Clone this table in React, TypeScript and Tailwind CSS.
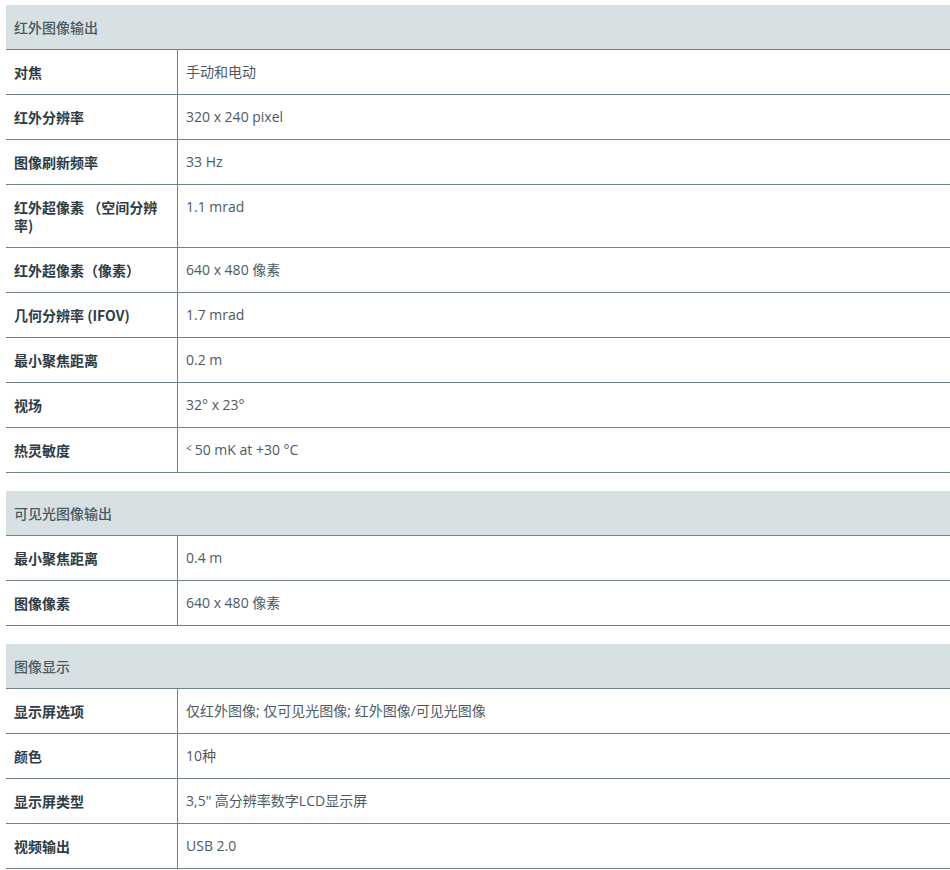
type Row = { label: string; value: string };
type Section = { title: string; rows: Row[] };

const sections: Section[] = [
  {
    title: '红外图像输出',
    rows: [
      { label: '对焦', value: '手动和电动' },
      { label: '红外分辨率', value: '320 x 240 pixel' },
      { label: '图像刷新频率', value: '33 Hz' },
      { label: '红外超像素 （空间分辨率)', value: '1.1 mrad' },
      { label: '红外超像素（像素）', value: '640 x 480 像素' },
      { label: '几何分辨率 (IFOV)', value: '1.7 mrad' },
      { label: '最小聚焦距离', value: '0.2 m' },
      { label: '视场', value: '32° x 23°' },
      { label: '热灵敏度', value: '˂ 50 mK at +30 °C' },
    ],
  },
  {
    title: '可见光图像输出',
    rows: [
      { label: '最小聚焦距离', value: '0.4 m' },
      { label: '图像像素', value: '640 x 480 像素' },
    ],
  },
  {
    title: '图像显示',
    rows: [
      { label: '显示屏选项', value: '仅红外图像; 仅可见光图像; 红外图像/可见光图像' },
      { label: '颜色', value: '10种' },
      { label: '显示屏类型', value: '3,5" 高分辨率数字LCD显示屏' },
      { label: '视频输出', value: 'USB 2.0' },
    ],
  },
];

// the small raised "<" in the source is a modifier letter, keep it tiny
const Value = ({ text }: { text: string }) =>
  text.startsWith('˂') ? (
    <>
      <span className="text-[10px] leading-[0] align-[3px] mr-[3px]">&lt;</span>
      {text.slice(2)}
    </>
  ) : (
    <>{text}</>
  );

const SpecSection = ({ section }: { section: Section }) => (
  <div className="w-full">
    <div className="h-[45px] flex items-center px-2 bg-[#d7e0e2] border-b border-[#6e8189] text-[14px] font-medium text-[#4a5a61]">
      {section.title}
    </div>
    {section.rows.map((row) => (
      <div key={row.label} className="grid grid-cols-[172px_1fr] border-b border-[#6e8189]">
        <div className="py-[13px] pl-2 pr-[10px] border-r border-[#6e8189] text-[14px] leading-[18px] font-bold text-[#2e3d45]">
          {row.label}
        </div>
        <div
          className="py-[13px] px-2 text-[14px] leading-[18px] text-[#4c5b63]"
          style={{ fontFamily: '"Open Sans", "Noto Sans CJK SC", sans-serif' }}
        >
          <Value text={row.value} />
        </div>
      </div>
    ))}
  </div>
);

export default function App() {
  return (
    <div
      className="bg-white min-h-[870px] pt-[5px] pl-[6px] flex flex-col gap-[18px]"
      style={{ fontFamily: '"Noto Sans CJK SC", "Noto Sans", sans-serif' }}
    >
      {sections.map((s) => (
        <SpecSection key={s.title} section={s} />
      ))}
    </div>
  );
}
